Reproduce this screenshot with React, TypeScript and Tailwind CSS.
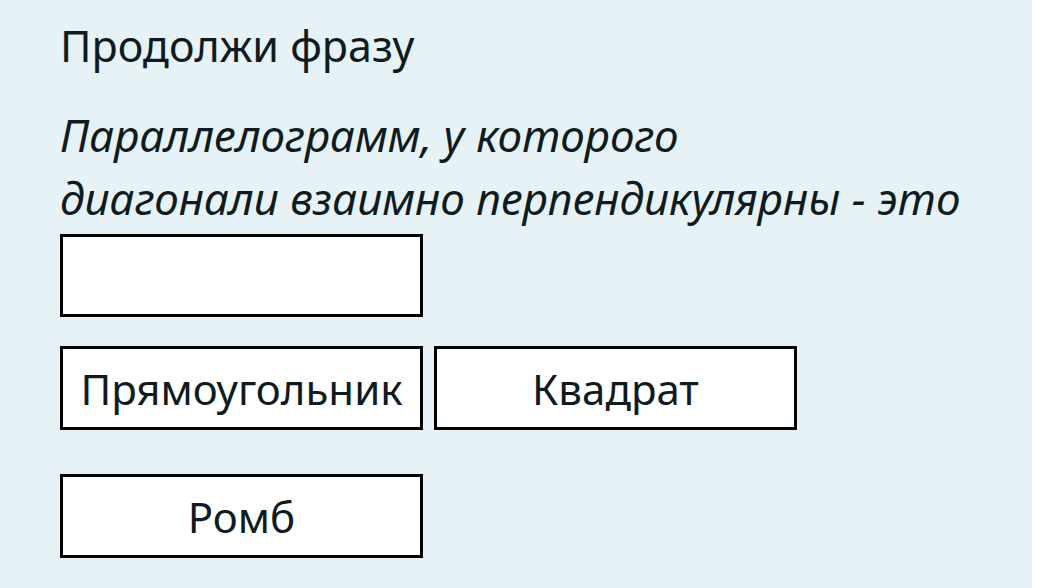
export default function App() {
  const font = { fontFamily: '"Noto Sans", "Open Sans", sans-serif' };
  return (
    <div className="flex h-[588px] w-[1055px] bg-white" style={font}>
      <div className="flex h-full w-[1032px] flex-col bg-[#e6f2f5] pl-[60px] text-[#0f1c1f]">
        <h1 className="mt-[20px] text-[43px] leading-[52px] font-normal">Продолжи фразу</h1>
        <div className="text-[44px] italic">
          <div className="mt-[38px] leading-[50px]">Параллелограмм, у которого</div>
          <div className="mt-[13px] leading-[50px]">диагонали взаимно перпендикулярны - это</div>
        </div>
        <div className="mt-[11px] h-[83px] w-[363px] border-[3px] border-black bg-white" />
        <div className="mt-[29px] flex gap-[11px]">
          <button className="flex h-[84px] w-[363px] items-center justify-center border-[3px] border-black bg-white text-[42px]">
            Прямоугольник
          </button>
          <button className="flex h-[84px] w-[363px] items-center justify-center border-[3px] border-black bg-white text-[42px]">
            Квадрат
          </button>
        </div>
        <div className="mt-[44px] flex">
          <button className="flex h-[84px] w-[363px] items-center justify-center border-[3px] border-black bg-white text-[42px]">
            Ромб
          </button>
        </div>
      </div>
    </div>
  );
}
